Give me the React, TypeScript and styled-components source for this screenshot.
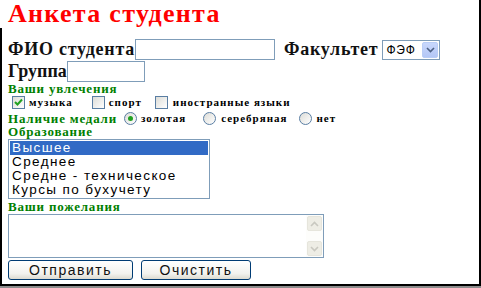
import React from "react";
import styled, { createGlobalStyle } from "styled-components";

const Global = createGlobalStyle`
  html, body { margin: 0; padding: 0; background: #fff; }
  body { width: 481px; height: 288px; overflow: hidden; }
  * { box-sizing: border-box; }
`;

const Page = styled.div`
  width: 481px;
  height: 288px;
  background: #8c8c8c;
  overflow: hidden;
`;

const Frame = styled.div`
  width: 481px;
  height: 286px;
  background: #fff;
  border-right: 2px solid #000;
  border-bottom: 2px solid #000;
  display: flex;
  flex-direction: column;
`;

const Title = styled.h1`
  margin: -1px 0 0;
  height: 29px;
  padding-left: 8px;
  font-family: "Liberation Serif", serif;
  font-weight: bold;
  font-size: 26px;
  line-height: 29px;
  letter-spacing: 1.3px;
  color: #ff0000;
  white-space: nowrap;
`;

const Body = styled.div`
  flex: 1;
  border-left: 2px solid #000;
  padding: 11px 0 0 6px;
  display: flex;
  flex-direction: column;
  align-items: flex-start;
`;

const Row = styled.div<{ $h: number; $mt?: number }>`
  display: flex;
  align-items: center;
  height: ${(p) => p.$h}px;
  margin-top: ${(p) => p.$mt ?? 0}px;
`;

const Label = styled.span<{ $ml?: number; $ls?: number }>`
  font-family: "Liberation Serif", serif;
  font-weight: bold;
  font-size: 18px;
  letter-spacing: ${(p) => p.$ls ?? 0.75}px;
  color: #111;
  margin-left: ${(p) => p.$ml ?? 0}px;
  white-space: nowrap;
`;

const TextInput = styled.div<{ $w: number }>`
  width: ${(p) => p.$w}px;
  height: 21px;
  border: 1px solid #7f9db9;
  background: #fff;
`;

const Select = styled.div`
  width: 58px;
  height: 20px;
  margin-left: 4px;
  border: 1px solid #7f9db9;
  background: #fff;
  display: flex;
  align-items: center;
  justify-content: space-between;
  padding: 1px 1px 1px 3px;
  font-family: "Liberation Sans", sans-serif;
  font-size: 12px;
  letter-spacing: 0.8px;
  color: #000;
`;

const DropBtn = styled.div`
  width: 16px;
  height: 16px;
  border-radius: 2px;
  background: linear-gradient(#c8d7fc, #b4c7f6);
  border: 1px solid #b9cdf6;
  display: flex;
  align-items: center;
  justify-content: center;
`;

const Section = styled.div<{ $mt?: number }>`
  font-family: "Liberation Serif", serif;
  font-weight: bold;
  font-size: 13px;
  line-height: 13px;
  letter-spacing: 0.8px;
  color: #008000;
  margin-top: ${(p) => p.$mt ?? 0}px;
  white-space: nowrap;
`;

const OptionRow = styled.div<{ $mt?: number }>`
  display: flex;
  align-items: center;
  height: 14px;
  margin-top: ${(p) => p.$mt ?? 0}px;
`;

const Check = styled.span<{ $ml: number }>`
  width: 13px;
  height: 13px;
  margin-left: ${(p) => p.$ml}px;
  border: 1px solid #5a7ea3;
  background: linear-gradient(135deg, #dcdcd7, #fff);
  display: flex;
  align-items: center;
  justify-content: center;
`;

const Radio = styled.span<{ $ml: number }>`
  width: 13px;
  height: 13px;
  margin-left: ${(p) => p.$ml}px;
  border: 1px solid #5a7ea3;
  border-radius: 50%;
  background: linear-gradient(135deg, #dcdcd7, #fff);
  display: flex;
  align-items: center;
  justify-content: center;
`;

const Dot = styled.span`
  width: 5px;
  height: 5px;
  border-radius: 50%;
  background: #21a121;
`;

const Tiny = styled.span<{ $ml: number }>`
  font-family: "Liberation Serif", serif;
  font-weight: bold;
  font-size: 11px;
  letter-spacing: 1px;
  color: #000;
  margin-left: ${(p) => p.$ml}px;
  white-space: nowrap;
`;

const ListBox = styled.div`
  width: 202px;
  height: 60px;
  margin-top: 1px;
  border: 1px solid #7f9db9;
  padding: 1px;
  background: #fff;
`;

const ListItem = styled.div<{ $sel?: boolean }>`
  height: 14px;
  line-height: 14px;
  padding-left: 2px;
  font-family: "Liberation Sans", sans-serif;
  font-size: 13.5px;
  letter-spacing: 1.4px;
  color: ${(p) => (p.$sel ? "#fff" : "#000")};
  background: ${(p) => (p.$sel ? "#316ac5" : "transparent")};
  white-space: nowrap;
`;

const AreaBox = styled.div`
  width: 316px;
  height: 44px;
  margin-top: 1px;
  border: 1px solid #7f9db9;
  display: flex;
  background: #fff;
`;

const Area = styled.textarea`
  flex: 1;
  border: none;
  outline: none;
  resize: none;
  background: transparent;
`;

const ScrollBar = styled.div`
  width: 17px;
  display: flex;
  flex-direction: column;
  justify-content: space-between;
  background: #fdfdfb;
  padding: 1px 1px;
`;

const ArrowBtn = styled.div`
  height: 15px;
  border-radius: 2px;
  background: #eeede5;
  border: 1px solid #e6e5dc;
  display: flex;
  align-items: center;
  justify-content: center;
`;

const ButtonRow = styled.div`
  display: flex;
  gap: 8px;
  margin-top: 2px;
`;

const Button = styled.button<{ $w: number }>`
  width: ${(p) => p.$w}px;
  height: 20px;
  padding: 0;
  border: 1px solid #003c74;
  border-radius: 3px;
  background: linear-gradient(#ffffff, #f2f2ee 70%, #dcdad0);
  font-family: "Liberation Sans", sans-serif;
  font-size: 14px;
  letter-spacing: 1.5px;
  color: #111;
`;

const Chevron = ({ up, color }: { up?: boolean; color: string }) => (
  <svg width="9" height="6" viewBox="0 0 9 6">
    <path
      d={up ? "M1 5 L4.5 1.5 L8 5" : "M1 1 L4.5 4.5 L8 1"}
      fill="none"
      stroke={color}
      strokeWidth="1.6"
    />
  </svg>
);

const Tick = () => (
  <svg width="9" height="8" viewBox="0 0 9 8">
    <path d="M1 4 L3.5 6.5 L8 1.5" fill="none" stroke="#21a121" strokeWidth="2" />
  </svg>
);

export default function App() {
  return (
    <Page>
      <Global />
      <Frame>
        <Title>Анкета студента</Title>
        <Body>
          <Row $h={21}>
            <Label>ФИО студента</Label>
            <TextInput $w={140} />
            <Label $ml={9}>Факультет</Label>
            <Select>
              <span>ФЭФ</span>
              <DropBtn>
                <Chevron color="#4d6185" />
              </DropBtn>
            </Select>
          </Row>
          <Row $h={20} $mt={1}>
            <Label $ls={0}>Группа</Label>
            <TextInput $w={78} />
          </Row>
          <Section $mt={1}>Ваши увлечения</Section>
          <OptionRow>
            <Check $ml={4}>
              <Tick />
            </Check>
            <Tiny $ml={4}>музыка</Tiny>
            <Check $ml={19} />
            <Tiny $ml={4}>спорт</Tiny>
            <Check $ml={13} />
            <Tiny $ml={5}>иностранные языки</Tiny>
          </OptionRow>
          <OptionRow $mt={2}>
            <Section>Наличие медали</Section>
            <Radio $ml={7}>
              <Dot />
            </Radio>
            <Tiny $ml={4}>золотая</Tiny>
            <Radio $ml={17} />
            <Tiny $ml={5}>серебряная</Tiny>
            <Radio $ml={12} />
            <Tiny $ml={4}>нет</Tiny>
          </OptionRow>
          <Section>Образование</Section>
          <ListBox>
            <ListItem $sel>Высшее</ListItem>
            <ListItem>Среднее</ListItem>
            <ListItem>Средне - техническое</ListItem>
            <ListItem>Курсы по бухучету</ListItem>
          </ListBox>
          <Section $mt={1}>Ваши пожелания</Section>
          <AreaBox>
            <Area />
            <ScrollBar>
              <ArrowBtn>
                <Chevron up color="#c9c8c0" />
              </ArrowBtn>
              <ArrowBtn>
                <Chevron color="#c9c8c0" />
              </ArrowBtn>
            </ScrollBar>
          </AreaBox>
          <ButtonRow>
            <Button $w={125}>Отправить</Button>
            <Button $w={110}>Очистить</Button>
          </ButtonRow>
        </Body>
      </Frame>
    </Page>
  );
}
